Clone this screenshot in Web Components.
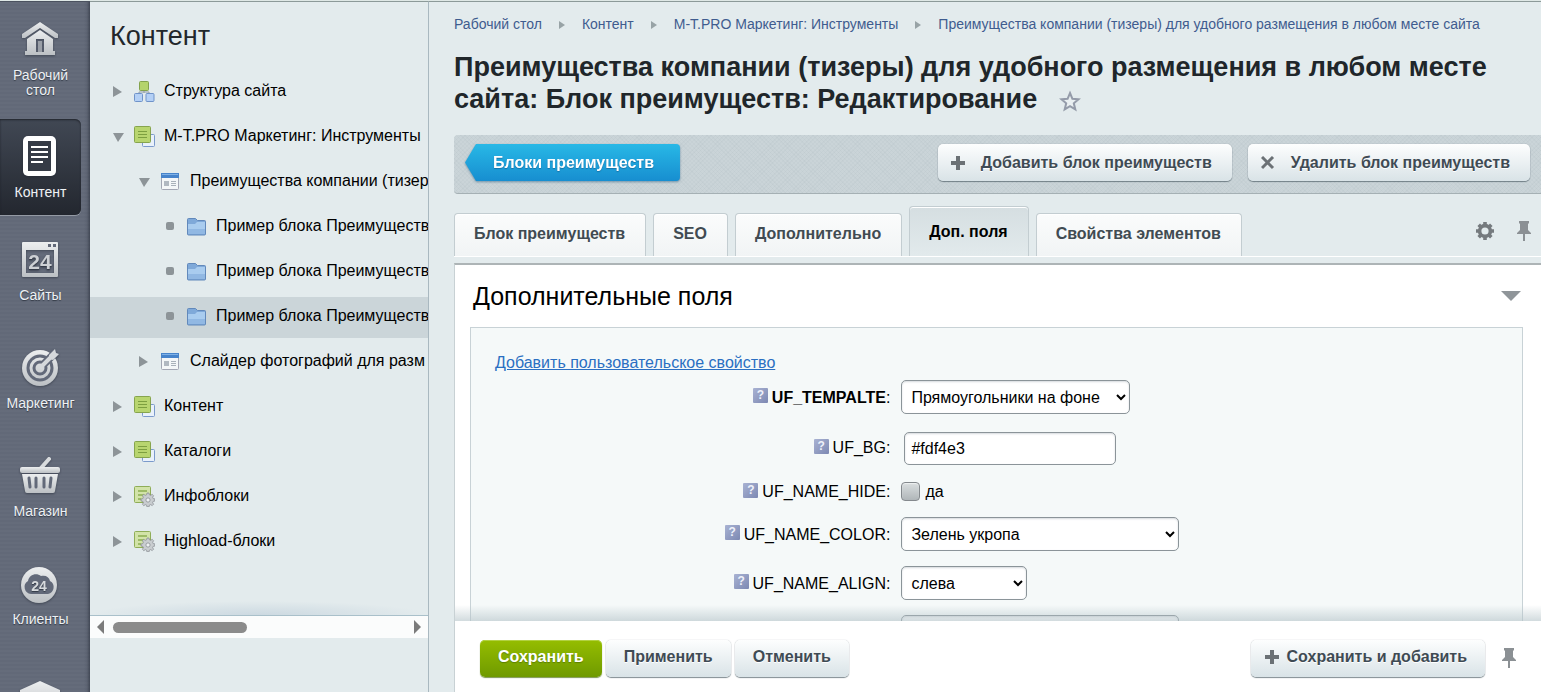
<!DOCTYPE html>
<html lang="ru">
<head>
<meta charset="utf-8">
<title>Блок преимуществ: Редактирование</title>
<style>
	html, body {
		margin: 0;
		height: 100%;
		overflow: hidden;
	}
	body {
		font-family: "Liberation Sans", Arial, sans-serif;
		font-size: 16px;
		line-height: 21px;
		color: #000;
		background: #e3ebed;
	}
</style>
</head>
<body>

<admin-app>
	<side-rail slot="rail">
		<rail-item icon="home">Рабочий стол</rail-item>
		<rail-item icon="content" active>Контент</rail-item>
		<rail-item icon="sites">Сайты</rail-item>
		<rail-item icon="marketing">Маркетинг</rail-item>
		<rail-item icon="shop">Магазин</rail-item>
		<rail-item icon="clients">Клиенты</rail-item>
		<rail-item icon="services"></rail-item>
	</side-rail>

	<tree-panel slot="tree" heading="Контент">
		<tree-row icon="structure" state="closed">Структура сайта</tree-row>
		<tree-row icon="block" state="open">M-T.PRO Маркетинг: Инструменты</tree-row>
		<tree-row icon="list" state="open" level="1">Преимущества компании (тизер</tree-row>
		<tree-row icon="folder" state="leaf" level="2">Пример блока Преимуществ</tree-row>
		<tree-row icon="folder" state="leaf" level="2">Пример блока Преимуществ</tree-row>
		<tree-row icon="folder" state="leaf" level="2" selected>Пример блока Преимуществ</tree-row>
		<tree-row icon="list" state="closed" level="1">Слайдер фотографий для разм</tree-row>
		<tree-row icon="block" state="closed">Контент</tree-row>
		<tree-row icon="block" state="closed">Каталоги</tree-row>
		<tree-row icon="blockGear" state="closed">Инфоблоки</tree-row>
		<tree-row icon="blockGear" state="closed">Highload-блоки</tree-row>
	</tree-panel>

	<bread-crumbs>
		<a href="#">Рабочий стол</a>
		<a href="#">Контент</a>
		<a href="#">M-T.PRO Маркетинг: Инструменты</a>
		<a href="#">Преимущества компании (тизеры) для удобного размещения в любом месте сайта</a>
	</bread-crumbs>
	<page-title>Преимущества компании (тизеры) для удобного размещения в любом месте сайта: Блок преимуществ: Редактирование</page-title>
	<tool-bar>
		<back-button>Блоки преимуществ</back-button>
		<ui-button slot="end" icon="plus" wide>Добавить блок преимуществ</ui-button>
		<ui-button slot="end" icon="cross" wide>Удалить блок преимуществ</ui-button>
	</tool-bar>
	<tab-bar>
		<tab-item>Блок преимуществ</tab-item>
		<tab-item>SEO</tab-item>
		<tab-item>Дополнительно</tab-item>
		<tab-item active>Доп. поля</tab-item>
		<tab-item>Свойства элементов</tab-item>
	</tab-bar>
	<form-panel heading="Дополнительные поля">
		<a slot="link" href="#">Добавить пользовательское свойство</a>
		<field-row name="UF_TEMPALTE" type="select" value="Прямоугольники на фоне" size="229" required></field-row>
		<field-row name="UF_BG" type="text" value="#fdf4e3"></field-row>
		<field-row name="UF_NAME_HIDE" type="checkbox" value="да"></field-row>
		<field-row name="UF_NAME_COLOR" type="select" value="Зелень укропа" size="278"></field-row>
		<field-row name="UF_NAME_ALIGN" type="select" value="слева" size="126"></field-row>
		<field-row name="" type="select" value="" size="278"></field-row>
	</form-panel>
	<action-bar>
		<ui-button kind="save">Сохранить</ui-button>
		<ui-button>Применить</ui-button>
		<ui-button>Отменить</ui-button>
		<ui-button slot="end" icon="plus">Сохранить и добавить</ui-button>
	</action-bar>
</admin-app>

<script>
// gradient of the rail icons
const railDefs = `
	<defs>
		<linearGradient id="g" x1="0" y1="0" x2="0" y2="1">
			<stop offset="0" stop-color="#eceeef"/><stop offset="1" stop-color="#bcc0c4"/>
		</linearGradient>
	</defs>`;

// 44x44 icons of the dark rail
const railIcons = {
	home: `<path fill="url(#g)" d="M21 4 3 16v4h3l15-10 15 10h3v-4z"/><path fill="url(#g)" fill-rule="evenodd" d="M21 12 8 21v12H6v4h30v-4h-2V21zM17 21h8v13h-8z"/><path fill="#9a9fa7" d="M19 23h4v11h-4z"/>`,
	content: `<rect x="4" y="1" width="33" height="40" rx="5" fill="#fff"/><rect x="9" y="6" width="23" height="30" fill="#353b46"/><path stroke="#fff" stroke-width="2" d="M12 12h17M12 17h17M12 22h17M12 27h12"/>`,
	sites: `<path fill="url(#g)" fill-rule="evenodd" d="M4 4h34a1 1 0 0 1 1 1v33a1 1 0 0 1-1 1H4a1 1 0 0 1-1-1V5a1 1 0 0 1 1-1zM7 12v23h28V12z"/><path fill="#626979" d="M29 6h3v3h-3zM34 6h3v3h-3z"/><text x="21" y="31" font-size="21" font-weight="bold" text-anchor="middle" fill="#cdd0d4">24</text>`,
	marketing: `<circle cx="21" cy="22" r="18" fill="url(#g)"/><g fill="none" stroke="#626979" stroke-width="3"><circle cx="21" cy="22" r="12"/><circle cx="21" cy="22" r="6"/></g><path stroke="#626979" stroke-width="8" d="M25 18 37 6"/><path stroke="#d5d8db" stroke-width="4" d="M21 22 35 8"/><path fill="#d5d8db" d="m30 9 6-6 1 4 3 1-6 6-4-1z"/>`,
	shop: `<path stroke="#d9dcde" stroke-width="4" stroke-linecap="round" d="m22 14 8-9"/><rect x="1" y="13" width="40" height="6" rx="2" fill="url(#g)"/><path fill="url(#g)" d="M3 20h36l-3 17a2 2 0 0 1-2 2H8a2 2 0 0 1-2-2z"/><path stroke="#626979" stroke-width="3" stroke-linecap="round" d="m10 24 1 9M17 24v9M25 24v9M32 24l-1 9"/>`,
	clients: `<circle cx="20" cy="23" r="18" fill="url(#g)"/><path fill="#626979" d="M12 32a7 7 0 0 1-3-13c1-6 8-9 13-5 5-1 8 1 9 5a7 7 0 0 1-2 13z"/><text x="20" y="29" font-size="14" font-weight="bold" text-anchor="middle" fill="#d8dbde">24</text>`,
	services: `<path fill="url(#g)" d="m21 11 20 9v24H1V20z"/>`
};

// 20x20 icons of the tree
const gearPath = 'M8.6 0h2.800l.5 2.500 2 .8 2.100-1.400 2 2-1.400 2.100.8 2 2.600.5v2.900l-2.600.5-.8 2 1.400 2.100-2 2-2.100-1.400-2 .8-.5 2.600H8.600l-.5-2.600-2-.8L4 18.100l-2-2L3.400 14l-.8-2L0 11.400V8.500L2.600 8l.8-2L2 3.900l2-2 2.100 1.400 2-.8z';
const treeIcons = {
	structure: `<path stroke="#8e9aa6" fill="none" d="M10 9v3M5 13v-2h10v2"/><rect x="5.5" y=".5" width="9" height="9" rx="1" fill="#b4d36c" stroke="#83a24d"/><rect x=".5" y="12.5" width="8" height="8" rx="1" fill="#b4d0f5" stroke="#6f93c9"/><rect x="12" y="12.5" width="8" height="8" rx="1" fill="#b4d0f5" stroke="#6f93c9"/>`,
	block: `<rect x="8.5" y="8.5" width="12" height="12" rx="1" fill="#e9f1fb" stroke="#7b9acb"/><rect x=".5" y=".5" width="16" height="16" rx="1" fill="#b8d56f" stroke="#86a44e"/><path stroke="#7d9f40" d="M4 5.5h9M4 8.5h9M4 11.5h9"/>`,
	list: `<rect x="1.5" y="2.5" width="17" height="16" rx="1" fill="#f4f6f8" stroke="#a3a6b4"/><path fill="#4683cb" d="M1 2h18v5H1z"/><path fill="#7eb0e6" d="M2 3h16v1H2z"/><path stroke="#a9b1ba" d="M11 10.5h5M11 12.5h5M11 14.5h5"/><path fill="#b1b8c1" d="M4 10h5v5H4z"/>`,
	folder: `<path fill="#7fa9d9" stroke="#6289bb" d="M1.5 18V3.5a1 1 0 0 1 1-1h7l2 2h7a1 1 0 0 1 1 1V18a1 1 0 0 1-1 1h-16a1 1 0 0 1-1-1z"/><path fill="#a9ccef" d="M2 8h7l2-2h8v7H2z"/><path fill="#91b8e3" d="M2 13h17v5H2z"/>`,
	blockGear: `<rect x=".5" y=".5" width="16" height="16" rx="1" fill="#d2e3a8" stroke="#8fad57"/><path stroke="#9dbb66" stroke-width="2" d="M4 5h9M4 9h6M4 13h3"/><g transform="translate(7 7) scale(.7)"><path fill="#c9cdd0" stroke="#82878c" d="${gearPath}"/><circle cx="10" cy="10" r="3" fill="#eef1f2" stroke="#82878c"/></g>`
};

const pin = `<svg width="14" height="20" viewBox="0 0 14 20" aria-hidden="true"><path fill="#8b9094" d="M2 0h10v2l-1 1v6l3 3v1H8v7H6v-7H0v-1l3-3V3L2 2z"/></svg>`;

const buttonIcons = {
	plus: `<path stroke="#6b7175" stroke-width="4" d="M7 0v14M0 7h14"/>`,
	cross: `<path stroke="#6b7175" stroke-width="3" d="m1 1 11 11M12 1 1 12"/>`
};

// attaches the shadow root and fills it
class BaseElement extends HTMLElement {
	connectedCallback() {
		if (this.shadowRoot) return;
		this.attachShadow({ mode: 'open' });
		this.shadowRoot.innerHTML = this.template();
	}
}

class AdminApp extends BaseElement {
	template() {
		return `
		<style>
		:host {
			display: grid;
			grid-template-columns: 90px 339px minmax(0, 1fr);
			height: 100vh;
			box-sizing: border-box;
			border-top: 1px solid #dfe8e6;
		}
		.main {
			display: flex;
			flex-direction: column;
			min-height: 0;
			padding-left: 25px;
			border-top: 1px solid #8c9a99;
			overflow: hidden;
		}
		</style>
		<slot name="rail"></slot>
		<slot name="tree"></slot>
		<main class="main"><slot></slot></main>
		`;
	}
}

class SideRail extends BaseElement {
	template() {
		return `
		<style>
		:host {
			display: block;
			min-height: 0;
			overflow: hidden;
			border-top: 1px solid #4b525f;
			background:
				linear-gradient(90deg, transparent 84px, rgba(30, 36, 48, .1) 87px, rgba(30, 36, 48, .5)),
				repeating-linear-gradient(0deg, rgba(255, 255, 255, .02) 0 2px, transparent 2px 4px),
				#626978;
		}
		nav {
			display: flex;
			flex-direction: column;
			align-items: flex-start;
			gap: 7px;
		}
		</style>
		<nav><slot></slot></nav>
		`;
	}
}

class RailItem extends BaseElement {
	template() {
		return `
		<style>
		:host {
			display: block;
			box-sizing: border-box;
			width: 81px;
			min-height: 101px;
			padding: 16px 4px 14px;
		}
		:host([active]) {
			min-height: 96px;
			padding-bottom: 13px;
			border-radius: 0 6px 6px 0;
			background: linear-gradient(#414854, #23272f);
			box-shadow: 0 1px 0 #949aa4, inset 0 1px 2px #20242b;
		}
		a {
			display: flex;
			flex-direction: column;
			align-items: center;
			gap: 6px;
			color: #eef1f4;
			font-size: 14px;
			line-height: 15px;
			text-align: center;
			text-decoration: none;
			text-shadow: 0 1px 1px #333a46;
		}
		svg {
			flex: none;
			filter: drop-shadow(0 1px 1px rgba(30, 36, 48, .5));
		}
		</style>
		<a href="#">
			<svg width="44" height="44" viewBox="0 0 44 44">${railDefs}${railIcons[this.getAttribute('icon')]}</svg>
			<slot></slot>
		</a>
		`;
	}
}

class TreePanel extends BaseElement {
	template() {
		return `
		<style>
		:host {
			display: flex;
			flex-direction: column;
			min-width: 0;
			min-height: 0;
			border-top: 1px solid #8c9a99;
			border-right: 1px solid #a9b8c0;
			background: #e3ebed;
			overflow: hidden;
		}
		h2 {
			margin: 0;
			padding: 19px 20px 21px;
			font-size: 27px;
			font-weight: normal;
			line-height: 30px;
			color: #22272b;
		}
		.rows {
			flex: 1;
			display: flex;
			flex-direction: column;
			gap: 4px;
			min-height: 0;
			overflow: hidden;
			border-bottom: 1px solid #a9c0ca;
			background: radial-gradient(50% 14px at 50% 100%, #ccd9e1, transparent);
		}
		.scroll {
			display: flex;
			align-items: center;
			gap: 9px;
			height: 22px;
			margin-bottom: 54px;
			padding: 0 7px;
			background: #fbfcfc;
		}
		.track { flex: 1; }
		.thumb {
			width: 134px;
			height: 11px;
			border-radius: 6px;
			background: #8b8b8b;
		}
		svg { fill: #7b7b7b; }
		</style>
		<h2>${this.getAttribute('heading')}</h2>
		<div class="rows"><slot></slot></div>
		<div class="scroll">
			<svg width="7" height="14"><path d="M7 0v14L0 7z"/></svg>
			<div class="track"><div class="thumb"></div></div>
			<svg width="7" height="14"><path d="M0 0v14l7-7z"/></svg>
		</div>
		`;
	}
}

class TreeRow extends BaseElement {
	template() {
		const marks = {
			closed: '<path d="M5 4v11l9-5z"/>',
			open: '<path d="M5 6h11l-6 9z"/>',
			leaf: '<rect x="6" y="5" width="8" height="8" rx="2"/>'
		};
		const indent = 18 + 26 * Number(this.getAttribute('level') || 0);
		return `
		<style>
		:host {
			display: flex;
			align-items: center;
			flex: none;
			box-sizing: border-box;
			height: 41px;
			padding: 0 0 4px ${indent}px;
			white-space: nowrap;
		}
		:host([selected]) { background: #cbd5d9; }
		.mark { fill: #8d9498; margin-top: 2px; }
		.icon { margin: 2px 9px 0 6px; }
		svg { flex: none; }
		a {
			color: #000;
			text-decoration: none;
		}
		</style>
		<svg class="mark" width="20" height="20">${marks[this.getAttribute('state')]}</svg>
		<svg class="icon" width="21" height="21">${treeIcons[this.getAttribute('icon')]}</svg>
		<a href="#"><slot></slot></a>
		`;
	}
}

class BreadCrumbs extends BaseElement {
	template() {
		return `
		<style>
		:host { display: block; flex: none; }
		nav {
			display: flex;
			align-items: center;
			padding-top: 12px;
			white-space: nowrap;
		}
		::slotted(a) {
			color: #3f5c8f;
			font-size: 14px;
			text-decoration: none;
		}
		/* small arrow between the links */
		::slotted(a:not(:last-of-type))::after {
			content: "";
			display: inline-block;
			margin: 0 17px;
			border: 4px solid transparent;
			border-left: 6px solid #98a3a6;
			border-right: 0;
		}
		</style>
		<nav><slot></slot></nav>
		`;
	}
}

class PageTitle extends BaseElement {
	template() {
		return `
		<style>
		:host { display: block; flex: none; }
		h1 {
			margin: 0;
			padding: 16px 24px 20px 0;
			font-size: 27px;
			line-height: 32px;
			color: #20262a;
		}
		button {
			margin: 0 0 0 22px;
			padding: 0;
			border: 0;
			background: none;
			vertical-align: -4px;
			line-height: 0;
		}
		</style>
		<h1><slot></slot><button aria-label="В избранное"><svg width="22" height="22" viewBox="0 0 22 22"><path fill="#e9eff1" stroke="#949ba9" stroke-width="2" d="m11 3 2.400 5.800 6.100.5-4.700 4 1.500 6.100-5.300-3.300-5.300 3.300 1.500-6.100-4.700-4 6.100-.5z"/></svg></button></h1>
		`;
	}
}

class ToolBar extends BaseElement {
	template() {
		return `
		<style>
		:host {
			display: flex;
			flex: none;
			align-items: center;
			gap: 16px;
			box-sizing: border-box;
			height: 59px;
			padding: 0 11px 3px;
			border-radius: 4px 0 0 4px;
			border-bottom: 1px solid #a5b0b4;
			background:
				repeating-linear-gradient(45deg, rgba(130, 148, 156, .06) 0 1px, transparent 1px 3px),
				repeating-linear-gradient(-45deg, rgba(130, 148, 156, .06) 0 1px, transparent 1px 3px),
				#cad4d8;
		}
		.space { flex: 1; }
		</style>
		<slot></slot>
		<span class="space"></span>
		<slot name="end"></slot>
		`;
	}
}

class BackButton extends BaseElement {
	template() {
		return `
		<style>
		:host {
			display: block;
			filter: drop-shadow(0 1px 1px rgba(20, 80, 120, .5));
		}
		button {
			display: block;
			height: 37px;
			padding: 0 26px 0 28px;
			border: 0;
			border-radius: 0 4px 4px 0;
			background: linear-gradient(#28b8e6, #178ed0);
			clip-path: polygon(0 50%, 11px 0, 100% 0, 100% 100%, 11px 100%);
			color: #fff;
			font: bold 16px "Liberation Sans", Arial, sans-serif;
			text-shadow: 0 1px 1px #1774a8;
		}
		</style>
		<button><slot></slot></button>
		`;
	}
}

class UiButton extends BaseElement {
	template() {
		const icon = buttonIcons[this.getAttribute('icon')];
		return `
		<style>
		:host { display: block; }
		button {
			display: flex;
			align-items: center;
			gap: 8px;
			height: 37px;
			padding: 0 18px 2px;
			border: 0;
			border-radius: 5px;
			background: linear-gradient(#fdfefe, #d9e3e7);
			box-shadow: 0 1px 1px rgba(80, 96, 104, .7), 0 0 1px rgba(80, 96, 104, .5);
			color: #3f4b54;
			font: bold 16px "Liberation Sans", Arial, sans-serif;
			white-space: nowrap;
			text-shadow: 0 1px 0 #fff;
		}
		:host([icon]) button { padding-left: 14px; }
		:host([wide]) button {
			gap: 16px;
			padding: 0 20px 0 13px;
		}
		:host([kind=save]) button {
			background: linear-gradient(#95bd00, #6f9a00);
			box-shadow: 0 1px 1px #7d9650, inset 0 1px 0 #b2d143;
			color: #fff;
			text-shadow: 0 1px 1px #5c7f00;
		}
		</style>
		<button>${icon ? `<svg width="14" height="14">${icon}</svg>` : ''}<slot></slot></button>
		`;
	}
}

class TabBar extends BaseElement {
	template() {
		return `
		<style>
		:host {
			display: flex;
			flex: none;
			align-items: flex-end;
			gap: 7px;
			height: 62px;
			padding-right: 10px;
			border-bottom: 1px solid #fff;
		}
		.tools {
			display: flex;
			flex: 1;
			justify-content: flex-end;
			align-items: center;
			gap: 23px;
			height: 50px;
		}
		button {
			padding: 0;
			border: 0;
			background: none;
			line-height: 0;
		}
		</style>
		<slot></slot>
		<div class="tools">
			<button aria-label="Настройки"><svg width="18" height="18" viewBox="0 0 20 20"><circle cx="10" cy="10" r="6" fill="none" stroke="#757a7e" stroke-width="4"/><path stroke="#757a7e" stroke-width="4" d="M10 0v4M10 16v4M0 10h4M16 10h4M3 3l3 3M14 14l3 3M17 3l-3 3M6 14l-3 3"/></svg></button>
			<button aria-label="Закрепить">${pin}</button>
		</div>
		`;
	}
}

class TabItem extends BaseElement {
	template() {
		return `
		<style>
		:host { display: block; }
		button {
			display: block;
			height: 43px;
			padding: 0 20px 3px 19px;
			border: 1px solid #c3cdd1;
			border-bottom: 0;
			border-radius: 4px 4px 0 0;
			background: linear-gradient(#fbfcfc, #f1f4f5);
			box-shadow: inset 0 1px 0 #fff;
			color: #414b52;
			font: bold 16px "Liberation Sans", Arial, sans-serif;
			white-space: nowrap;
		}
		:host([active]) button {
			height: 50px;
			padding-bottom: 0;
			background: linear-gradient(#d5dee1, #e2eaec);
			color: #000;
		}
		</style>
		<button><slot></slot></button>
		`;
	}
}

class FormPanel extends BaseElement {
	template() {
		return `
		<style>
		:host {
			display: flex;
			flex: 1;
			flex-direction: column;
			min-height: 0;
			overflow: hidden;
			margin-top: 6px;
			padding: 0 18px 0 15px;
			border-top: 2px solid #adb4b6;
			border-left: 1px solid #c8d1d4;
			background: #fff;
		}
		header {
			display: flex;
			flex: none;
			align-items: center;
			justify-content: space-between;
			padding: 15px 2px 15px 3px;
		}
		h2 {
			margin: 0;
			font-size: 25px;
			font-weight: normal;
			line-height: 32px;
		}
		button {
			padding: 0;
			border: 0;
			background: none;
			line-height: 0;
		}
		.fields {
			flex: 1 0 auto;
			padding-top: 24px;
			border: 1px solid #c8d2d6;
			border-bottom: 0;
			background: #f5f9f9;
		}
		.link {
			padding-left: 24px;
		}
		::slotted(a) { color: #2a6fc2; }
		</style>
		<header>
			<h2>${this.getAttribute('heading')}</h2>
			<button aria-label="Свернуть"><svg width="20" height="10"><path fill="#8f9599" d="M0 0h20L10 10z"/></svg></button>
		</header>
		<div class="fields">
			<div class="link"><slot name="link"></slot></div>
			<slot></slot>
		</div>
		`;
	}
}

class FieldRow extends BaseElement {
	template() {
		const name = this.getAttribute('name');
		const value = this.getAttribute('value');
		const type = this.getAttribute('type');
		let control = '';
		if (type === 'select') {
			control = `<select id="field" style="width: ${this.getAttribute('size')}px"><option>${value}</option></select>`;
		} else if (type === 'text') {
			control = `<input id="field" type="text" value="${value}">`;
		} else {
			control = `<input id="field" type="checkbox"><label class="after" for="field">${value}</label>`;
		}
		return `
		<style>
		:host {
			display: grid;
			grid-template-columns: 40% 60%;
			align-items: center;
			padding: 7px 0 8px;
		}
		.name {
			display: flex;
			justify-content: flex-end;
			align-items: center;
			gap: 4px;
			padding-right: 1px;
		}
		b { font-weight: normal; }
		:host([required]) b { font-weight: bold; }
		.help {
			box-sizing: border-box;
			width: 15px;
			height: 15px;
			margin-bottom: 3px;
			border-radius: 1px;
			background: linear-gradient(135deg, #a9b3d3, #7c88b2);
			color: #eef1fa;
			font-size: 12px;
			font-weight: bold;
			line-height: 15px;
			text-align: center;
		}
		.control {
			display: flex;
			align-items: center;
			padding-left: 10px;
		}
		select, input[type=text] {
			box-sizing: border-box;
			border: 1px solid #8b9499;
			border-radius: 5px;
			background: #fff;
			box-shadow: inset 0 1px 2px #d5dadd;
			color: #000;
			font: 16px "Liberation Sans", Arial, sans-serif;
		}
		select {
			height: 34px;
			padding: 0 3px 0 5px;
		}
		input[type=text] {
			width: 212px;
			height: 33px;
			margin: 3px 3px 1px;
			padding: 0 6px;
		}
		input[type=checkbox] {
			appearance: none;
			width: 19px;
			height: 19px;
			margin: 1px 5px 1px 0;
			border: 1px solid #84898d;
			border-radius: 4px;
			background: linear-gradient(#d9dedf, #b0b6b9);
			box-shadow: inset 0 1px 1px #eef1f1;
		}
		</style>
		<div class="name">${name ? `<span class="help">?</span><label for="field"><b>${name}</b>:</label>` : ''}</div>
		<div class="control">${control}</div>
		`;
	}
}

class ActionBar extends BaseElement {
	template() {
		return `
		<style>
		:host {
			position: relative;
			display: flex;
			flex: none;
			align-items: center;
			gap: 4px;
			box-sizing: border-box;
			height: 71px;
			padding: 3px 25px 0;
			border-left: 1px solid #c8d1d4;
			background: #fff;
		}
		/* fade over the end of the form */
		:host::before {
			content: "";
			position: absolute;
			left: 0;
			right: 0;
			bottom: 100%;
			height: 16px;
			background: linear-gradient(rgba(180, 195, 200, 0), rgba(180, 195, 200, .6));
		}
		.end {
			display: flex;
			flex: 1;
			justify-content: flex-end;
			align-items: center;
			gap: 17px;
		}
		.pin {
			padding: 0;
			border: 0;
			background: none;
			line-height: 0;
		}
		</style>
		<slot></slot>
		<div class="end">
			<slot name="end"></slot>
			<button class="pin" aria-label="Закрепить панель">${pin}</button>
		</div>
		`;
	}
}

customElements.define('admin-app', AdminApp);
customElements.define('side-rail', SideRail);
customElements.define('rail-item', RailItem);
customElements.define('tree-panel', TreePanel);
customElements.define('tree-row', TreeRow);
customElements.define('bread-crumbs', BreadCrumbs);
customElements.define('page-title', PageTitle);
customElements.define('tool-bar', ToolBar);
customElements.define('back-button', BackButton);
customElements.define('ui-button', UiButton);
customElements.define('tab-bar', TabBar);
customElements.define('tab-item', TabItem);
customElements.define('form-panel', FormPanel);
customElements.define('field-row', FieldRow);
customElements.define('action-bar', ActionBar);
</script>
</body>
</html>
